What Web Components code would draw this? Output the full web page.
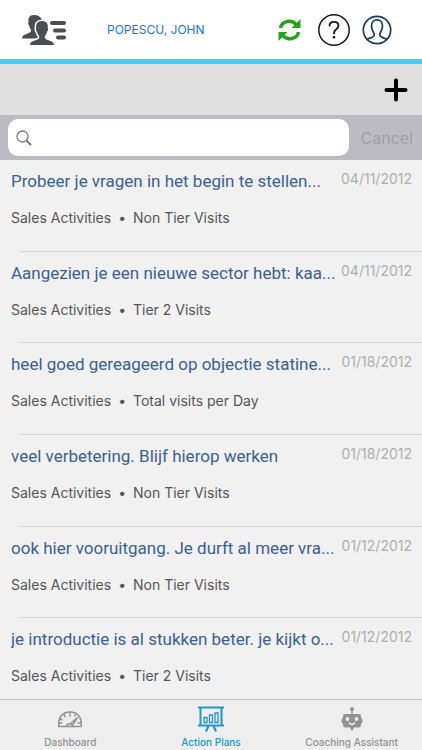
<!DOCTYPE html>
<html lang="nl">
<head>
<meta charset="utf-8">
<meta name="viewport" content="width=device-width, initial-scale=1">
<title>Action Plans</title>
<style>
html, body { margin: 0; height: 100%; }
body { font-family: Inter, "Liberation Sans", sans-serif; background: #f1f1f1; }
</style>
</head>
<body>
<coach-app></coach-app>

<template id="app-header">
<style>
:host { display: block; background: #fff; border-bottom: 5px solid #46cdfa; }
header { display: flex; align-items: center; height: 59px; padding: 0 30px 0 22px; box-sizing: border-box; }
button, a { display: block; border: 0; padding: 0; background: none; }
svg { display: block; }
a { margin-left: 41px; font-size: 12px; line-height: 20px; color: #2270ea; text-decoration: none; white-space: nowrap; }
nav { display: flex; align-items: center; gap: 12px; margin-left: auto; }
nav button:first-child { margin-right: 5px; }
</style>
<header>
<button aria-label="Team">
<svg width="44" height="30" viewBox="0 0 44 30" fill="#4c4d50">
<path d="M11.500 0C7.500 0 6 3 6.500 7C5.800 7.500 6.200 10 7.200 10.500C7.500 12.500 8.200 13.500 9 14.500V16.500C7 19 0 19 0 23.500H17L20 5C18.500 1 15 0 11.500 0Z"/>
<path stroke="#fff" stroke-width="3" paint-order="stroke" d="M20 6C15.500 6 13.500 9 14.300 13C13.500 13.500 14 16 15 16.700C15.400 18.700 16.200 20 17.200 21V23C15.500 26 8 25 8 30H32C32 25 24.500 26 22.800 23V21C23.800 20 24.600 18.700 25 16.700C26 16 26.500 13.500 25.700 13C26.500 9 24.500 6 20 6Z"/>
<rect x="28" y="6" width="16" height="4" rx="2"/><rect x="31" y="13.500" width="13" height="4" rx="2"/><rect x="34" y="20.500" width="10" height="4" rx="2"/>
</svg></button>
<a href="#profile">POPESCU, JOHN</a>
<nav>
<button aria-label="Refresh"><svg width="23" height="22" viewBox="0 0 23 22"><g fill="none" stroke="#26a01d" stroke-width="3.500"><path d="M2.500 9C4 1.500 14 0 18.500 6"/><path d="M20.500 13C19 20.500 9 22 4.500 16"/></g><path fill="#26a01d" d="M22.500 0V9H13.500ZM.5 22V13H9.500Z"/></svg></button>
<button aria-label="Help"><svg width="32" height="32" viewBox="0 0 32 32" fill="none" stroke="#151515" stroke-width="1.500"><circle cx="16" cy="16" r="15.200"/><path stroke-width="1.800" stroke-linecap="round" d="M11.500 11.500C11.500 6.500 20.500 6.500 20.500 11.800C20.500 15.500 16 14.500 16 19.500"/><circle cx="16" cy="23.200" r="1.300" fill="#151515" stroke="none"/></svg></button>
<button aria-label="Account"><svg width="30" height="30" viewBox="0 0 30 30" fill="none" stroke="#17395e" stroke-width="1.700"><circle cx="15" cy="15" r="13.700"/><path d="M5 24.800C7 22.500 12 23 12.300 20C12.500 17.500 9.500 16 9.500 11C9.500 2.800 20.500 2.800 20.500 11C20.500 16 17.500 17.500 17.700 20C18 23 23 22.500 25 24.800"/></svg></button>
</nav>
</header>
</template>

<template id="search-tools">
<style>
:host { display: block; }
.add { display: flex; justify-content: flex-end; align-items: center; height: 51px; padding: 0 14px; background: #e0e0e0; }
button { border: 0; padding: 0; background: none; font: inherit; }
svg { display: block; }
form { display: flex; align-items: center; gap: 12px; height: 45px; padding: 0 9px 0 8px; background: #bcbbc1; box-sizing: border-box; }
label { display: flex; align-items: center; flex: 1; min-width: 0; height: 37px; padding-left: 8px; border-radius: 10px; background: #fff; }
input { flex: 1; min-width: 0; border: 0; outline: 0; background: none; font: inherit; font-size: 16px; }
form button { color: #a09fa5; font-size: 16px; line-height: 24px; }
</style>
<div class="add"><button aria-label="Add action plan"><svg width="24" height="24" viewBox="0 0 24 24" stroke="#000" stroke-width="4" stroke-linecap="round"><path d="M12 2.500V21.500M2.500 12H21.500"/></svg></button></div>
<form>
<label><svg width="16" height="16" viewBox="0 0 16 16" fill="none" stroke="#777" stroke-width="1.300"><circle cx="6.500" cy="6.500" r="5.500"/><path stroke-width="2" d="M10.500 10.500L15 15"/></svg><input type="text" aria-label="Search"></label>
<button type="button">Cancel</button>
</form>
</template>

<template id="plan-item">
<style>
:host { display: block; position: relative; padding: 9px 10px 0 11px; box-sizing: border-box; min-width: 0; }
:host(:not(:last-child))::after { content: ""; position: absolute; left: 20px; right: 0; bottom: 0; height: 1px; background: #d6d6d8; }
.top { display: flex; justify-content: space-between; gap: 4px; }
a { flex: 1; min-width: 0; overflow: hidden; white-space: nowrap; color: #3b5f94; font-family: Roboto, "Liberation Sans", sans-serif; font-size: 17px; line-height: 24px; text-decoration: none; }
time { color: #afafaf; font-size: 14px; line-height: 20px; }
p { display: flex; gap: 7px; margin: 15px 0 0; color: #555; font-size: 14px; line-height: 20px; white-space: nowrap; }
</style>
<div class="top"><a href="#plan"><slot></slot></a><time><slot name="date"></slot></time></div>
<p><span>Sales Activities</span><span>•</span><slot name="kind"></slot></p>
</template>

<template id="tab-link">
<style>
:host { display: block; flex: 1; color: #929292; }
a { display: flex; flex-direction: column; align-items: center; color: inherit; text-decoration: none; font-size: 10px; font-weight: 500; line-height: 14px; white-space: nowrap; }
.icon { display: flex; align-items: center; justify-content: center; height: 28px; margin: 5px 0 2px; }
:host([active]) { color: #2395cf; }
</style>
<a href="#tab"><span class="icon"><slot name="icon"></slot></span><slot></slot></a>
</template>

<template id="coach-app">
<style>
:host { display: flex; flex-direction: column; height: 100vh; overflow: hidden; }
app-header, search-tools, nav { flex: none; }
main { flex: 1; min-height: 0; overflow: hidden; background: #f1f1f1; }
.list { display: grid; grid-template-columns: minmax(0, 1fr); grid-template-rows: repeat(6, 1fr); min-height: 550px; }
nav { display: flex; height: 51px; box-sizing: border-box; border-top: 1px solid #c6c6c6; background: #eee; }
svg { display: block; }
</style>
<app-header></app-header>
<search-tools></search-tools>
<main><div class="list">
<plan-item>Probeer je vragen in het begin te stellen...<span slot="date">04/11/2012</span><span slot="kind">Non Tier Visits</span></plan-item>
<plan-item>Aangezien je een nieuwe sector hebt: kaa...<span slot="date">04/11/2012</span><span slot="kind">Tier 2 Visits</span></plan-item>
<plan-item>heel goed gereageerd op objectie statine...<span slot="date">01/18/2012</span><span slot="kind">Total visits per Day</span></plan-item>
<plan-item>veel verbetering. Blijf hierop werken<span slot="date">01/18/2012</span><span slot="kind">Non Tier Visits</span></plan-item>
<plan-item>ook hier vooruitgang. Je durft al meer vra...<span slot="date">01/12/2012</span><span slot="kind">Non Tier Visits</span></plan-item>
<plan-item>je introductie is al stukken beter. je kijkt o...<span slot="date">01/12/2012</span><span slot="kind">Tier 2 Visits</span></plan-item>
</div></main>
<nav>
<tab-link><svg slot="icon" width="24" height="17" viewBox="0 0 24 17" fill="none" stroke="currentColor" stroke-width="1.500"><path stroke-width="1.700" d="M1 15.500C-.5 7 4.500 1 12 1S24.500 7 23 15.500Z" stroke-linejoin="round"/><path d="M12 2V5.500M6 3.500L7.500 6M2 8L4.500 9M1.500 12H4.500M17.500 3.500L16.500 5.500M22.500 12H19.500M8.500 15C9 12 13 12 15 15M12 13L19.500 6.500L14.500 14"/></svg>Dashboard</tab-link>
<tab-link active><svg slot="icon" width="26" height="26" viewBox="0 0 26 26" fill="none" stroke="currentColor" stroke-width="2"><path d="M0 1.500H26M0 19.500H26M2.500 1V20M23.500 1V20M10.500 20L8 25.500M15.500 20L18 25.500"/><path stroke-width="1.300" d="M6 11.500H9V16.500H6ZM11.500 9H14.500V16.500H11.500ZM17 7H20V16.500H17Z"/></svg>Action Plans</tab-link>
<tab-link><svg slot="icon" width="22" height="24" viewBox="0 0 22 24" fill="currentColor"><circle cx="11" cy="2" r="2"/><path d="M10.300 2H11.700V8H10.300Z"/><path d="M4 7H18Q20 7 20 9V11Q21.500 11 21.500 13V15Q21.500 16.500 20 16.500V18Q20 20.500 17.500 20.500H13L11 24L9 20.500H4.500Q2 20.500 2 18V16.500Q.5 16.500 .5 15V13Q.5 11 2 11V9Q2 7 4 7Z"/><g fill="#eee"><circle cx="6.500" cy="12" r="1.900"/><circle cx="15.500" cy="12" r="1.900"/></g><path fill="none" stroke="#eee" stroke-width="1.300" d="M8 15.500Q11 19.500 14 15.500"/></svg>Coaching Assistant</tab-link>
</nav>
</template>

<script>
for (const name of ["app-header", "search-tools", "plan-item", "tab-link", "coach-app"]) {
  customElements.define(name, class extends HTMLElement {
    constructor() {
      super();
      this.attachShadow({ mode: "open" }).append(document.getElementById(name).content.cloneNode(true));
    }
  });
}
</script>
</body>
</html>
